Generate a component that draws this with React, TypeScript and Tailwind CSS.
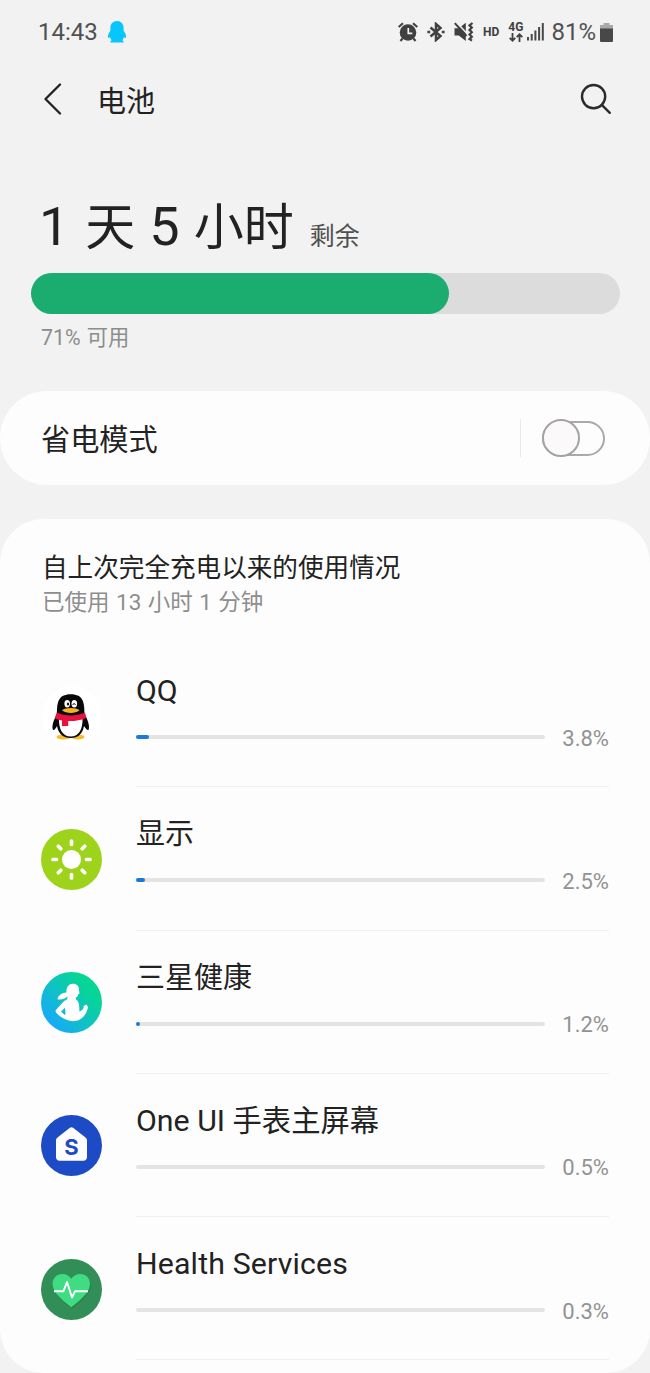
import React from 'react';

interface UsageItem {
  name: React.ReactNode;
  percent: string;
  barWidth: number;
  icon: React.ReactNode;
}

const QQStatusIcon = () => (
  <svg width="20" height="24" viewBox="0 0 20 24" fill="#08c5fb">
    <path d="M10 1C6 1 3.400 4 3.400 8v2.700C2 12.500.8 15 .9 17.200c.1 1.100.9.900 2.100-.2.300 1.300.8 2.400 1.700 3.300-1.200.5-1.500 1.300-1.300 2.300h13.200c.2-1-.1-1.800-1.300-2.300.9-.9 1.400-2 1.700-3.300 1.200 1.100 2 1.300 2.100.2.100-2.200-1.100-4.700-2.500-6.500V8C16.600 4 14 1 10 1z" />
  </svg>
);

const AlarmIcon = () => (
  <svg width="20" height="20" viewBox="0 0 20 20" fill="none">
    <circle cx="10" cy="10.500" r="8.300" fill="#404040" />
    <path d="M.7 5 5 1.300M19.300 5 15 1.300M4.500 16.500 2.500 19M15.500 16.500l2 2.500" stroke="#404040" strokeWidth="2.100" />
    <path d="M10.300 6v5.300h4" stroke="#f2f2f2" strokeWidth="1.700" />
  </svg>
);

const BluetoothIcon = () => (
  <svg width="18" height="20" viewBox="0 0 18 20" fill="none" stroke="#404040" strokeWidth="2.500">
    <path d="M3.500 5.500 13.500 14 9 18V2l4.500 4-10 8.500" />
    <path d="M.4 10h2.800M14.800 10h2.800" strokeWidth="2.600" />
  </svg>
);

const MuteVibrateIcon = () => (
  <svg width="20" height="20" viewBox="0 0 20 20" fill="none">
    <path d="M.5 6.300h4.300L11.800.7v18.300L4.800 13.500H.5z" fill="#404040" />
    <path d="M1.800-.5 14 12.700" stroke="#f2f2f2" strokeWidth="1.600" />
    <path d="M.8 1.200 12.500 14" stroke="#404040" strokeWidth="2" />
    <path d="m18.500 1-3 2.300 2.300 2.300-2.300 2.300 2.300 2.300-2.300 2.300 2.300 2.300-2.300 2.300 2.500 1.500" stroke="#404040" strokeWidth="2.200" />
  </svg>
);

const DataArrowsIcon = () => (
  <svg width="14" height="9" viewBox="0 0 14 9" fill="none" stroke="#404040" strokeWidth="1.800">
    <path d="M3.500 0v7.500M.7 4.900l2.800 2.800 2.800-2.800M10.500 9V1.500M7.700 4.100l2.800-2.800 2.800 2.800" />
  </svg>
);

const SignalIcon = () => (
  <svg width="17" height="18" viewBox="0 0 17 18" fill="#484848">
    <rect x="0" y="14" width="2" height="3.500" />
    <rect x="3.700" y="11" width="2" height="6.500" />
    <rect x="7.400" y="7.500" width="2" height="10" />
    <rect x="11.100" y="4" width="2" height="13.500" />
    <rect x="14.800" y="0" width="2" height="17.500" />
  </svg>
);

const BatteryIcon = () => (
  <svg width="13" height="19" viewBox="0 0 13 19">
    <path d="M0 2h3.500V0h6v2H13v4H0z" fill="#a9a9a9" />
    <path d="M0 5.500h13V18a1 1 0 0 1-1 1H1a1 1 0 0 1-1-1z" fill="#484848" />
  </svg>
);

const BackIcon = () => (
  <svg width="18" height="32" viewBox="0 0 18 32" fill="none" stroke="#222" strokeWidth="2.300" strokeLinecap="round" strokeLinejoin="round">
    <path d="M16 1.500 1.500 16 16 30.500" />
  </svg>
);

const SearchIcon = () => (
  <svg width="32" height="32" viewBox="0 0 32 32" fill="none" stroke="#2b2b2b" strokeWidth="2.400" strokeLinecap="round">
    <circle cx="13.600" cy="13.600" r="11.600" />
    <path d="m21.800 21.800 8 8" />
  </svg>
);

const QQIcon = () => (
  <svg width="61" height="61" viewBox="0 0 61 61">
    <circle cx="30.500" cy="30.500" r="30" fill="#fff" />
    <ellipse cx="22.500" cy="51" rx="7" ry="2.400" fill="#f4bb2c" />
    <ellipse cx="37" cy="51" rx="6.500" ry="2.400" fill="#f4bb2c" />
    <path d="M16 28c-3 5-5.500 12-4.200 15.500.7 1.500 3-.5 4.200-3.500C17.500 48.500 23 52 29.700 52c6.800 0 11.800-3.500 13.300-12 1.700 3 4 5 4.700 3.500C49 40 46.500 33 43.500 28c0-11-1-19.700-13.800-19.700S16 17 16 28z" fill="#080808" />
    <path d="M18 32c-.5 11 3.500 18.500 11.700 18.500S42 43 41.500 32z" fill="#fff" />
    <path d="M15.600 26.500c8 4 20 4 28.400 0l1.200 5.500c-6.500 2.500-12 3.300-18 3v5h-6.200v-5.500c-2.500-.4-4.900-1-7-2z" fill="#e9123f" />
    <ellipse cx="26.200" cy="17.800" rx="2.800" ry="3.700" fill="#fff" />
    <ellipse cx="33.300" cy="17.800" rx="2.800" ry="3.700" fill="#fff" />
    <ellipse cx="27" cy="18" rx="1.100" ry="1.600" fill="#080808" />
    <path d="M31.900 19c.2-2 2.100-2 2.400 0" fill="none" stroke="#080808" strokeWidth="1" />
    <path d="M21 24.300c3.500-3 14-3 17.500 0-4 3.700-13.500 3.700-17.500 0z" fill="#f4b324" />
  </svg>
);

const DisplayIcon = () => (
  <svg width="61" height="61" viewBox="0 0 61 61">
    <circle cx="30.500" cy="30.500" r="30.500" fill="#9ed31c" />
    <circle cx="30.500" cy="30.500" r="9.500" fill="#fff" />
    <path d="M30.500 12v3.500M30.500 45.500V49M12 30.500h3.500M45.500 30.500H49M17.300 17.300l2.500 2.500M41.200 41.200l2.500 2.500M43.700 17.300l-2.500 2.500M19.800 41.200l-2.500 2.500" stroke="#fff" strokeWidth="3.700" strokeLinecap="round" />
  </svg>
);

const SamsungHealthIcon = () => (
  <svg width="61" height="61" viewBox="0 0 61 61">
    <defs>
      <linearGradient id="healthBg" x1="0.15" y1="0.9" x2="0.8" y2="0.3">
        <stop offset="0%" stopColor="#18a8fb" />
        <stop offset="50%" stopColor="#10c0c8" />
        <stop offset="100%" stopColor="#05d695" />
      </linearGradient>
    </defs>
    <circle cx="30.500" cy="30.500" r="30.500" fill="url(#healthBg)" />
    <path d="M25.500 20.500c-.5-5 2-8.800 6.500-8.800 4.300 0 6.300 3 6 6.500l.5 3.200-1.300.8c-.2 2.200-1.200 3-2.500 3.100l.3 2c2.300 1.500 3.200 4.500 3.300 8.500l.1 3.700c2.500-1 3.800-2.300 4.300-4l-.2-1.500 3-1.500 1.500 2.500c-.7 5-3.700 10-8.500 12.800-3.500 1.800-8.500 1.800-12.500.3-4-1.500-8-4-11-7.500-.8-1-.5-2 .3-3l6-6.500c1.500-1.800 3.200-3 5-3.800l.2-3c-2.500 2.700-6 3.700-10 3 1-4 4-6.500 9-6.800z" fill="#fff" />
    <path d="m20 39.800 3.800-4.100c.7 2.500.7 4.800.4 7.500z" fill="#14b6df" />
  </svg>
);

const WatchHomeIcon = () => (
  <svg width="61" height="61" viewBox="0 0 61 61">
    <circle cx="30.500" cy="30.500" r="30.500" fill="#1d4bc5" />
    <path d="M28.900 12.800a2.600 2.600 0 0 1 3.200 0l12.400 9.600c1 .8 1.500 1.800 1.500 3V42c0 2.300-1.400 3.700-3.700 3.700H18.700C16.400 45.700 15 44.300 15 42V25.400c0-1.200.5-2.200 1.500-3z" fill="#fff" />
    <text x="30.500" y="39.800" textAnchor="middle" fill="#1d4bc5" className="font-['Inter','Roboto',sans-serif] text-[22px] font-bold">S</text>
  </svg>
);

const HealthServicesIcon = () => (
  <svg width="61" height="61" viewBox="0 0 61 61">
    <circle cx="30.500" cy="30.500" r="30.500" fill="#328e57" />
    <path d="M31 50C18 40 12.500 33 12.500 26.500c0-6 4-10 9.500-10 3.500 0 7 2 9 4.800 2-2.800 5.500-4.800 9-4.800 5.500 0 10 4 10 10C50 33 44 40 31 50z" fill="#2a7a4a" opacity=".6" />
    <path d="M30.300 48.300C17 38 11.600 31.500 11.600 24.800c0-5.700 4.200-9.800 9.700-9.800 3.700 0 7 1.900 9 4.700 2-2.800 5.300-4.700 9-4.700 5.500 0 9.700 4.100 9.700 9.800 0 6.700-5.400 13.200-18.700 23.500z" fill="#40dc84" />
    <path d="M13 32.200h9.500L26 23l5 15.500 3-6.300h13" fill="none" stroke="#fff" strokeWidth="1.900" strokeLinejoin="round" />
  </svg>
);

const USAGE: UsageItem[] = [
  { name: 'QQ', percent: '3.8%', barWidth: 13, icon: <QQIcon /> },
  { name: <span className="text-[29px]">显示</span>, percent: '2.5%', barWidth: 9, icon: <DisplayIcon /> },
  { name: <span className="text-[29px]">三星健康</span>, percent: '1.2%', barWidth: 4, icon: <SamsungHealthIcon /> },
  { name: <>One UI <span className="text-[29.300px]">手表主屏幕</span></>, percent: '0.5%', barWidth: 0, icon: <WatchHomeIcon /> },
  { name: <span className="tracking-[0.150px]">Health Services</span>, percent: '0.3%', barWidth: 0, icon: <HealthServicesIcon /> },
];

const UsageRow: React.FC<{ item: UsageItem }> = ({ item }) => (
  <div className="flex h-[143.25px] items-center pl-[41px] pr-[41px]">
    <div className="mt-px w-[95px] shrink-0">{item.icon}</div>
    <div className="flex h-full flex-1 flex-col border-b border-[#f0f0f0]">
      <p className="mt-[27px] h-10 whitespace-nowrap text-[30.300px] leading-10 text-[#222]">{item.name}</p>
      <div className="mt-[12px] flex h-7 items-center justify-between">
        <div className="h-1 w-[409px] rounded-full bg-[#e4e4e4]">
          <div className="h-1 rounded-full bg-[#1b7ad9]" style={{ width: item.barWidth }} />
        </div>
        <span className="pt-[3px] text-[22px] leading-7 text-[#929292]">{item.percent}</span>
      </div>
    </div>
  </div>
);

export default function App() {
  return (
    <div className="h-[1373px] w-[650px] overflow-hidden bg-[#f2f2f2] font-['Roboto','Noto_Sans_CJK_SC',sans-serif] text-[#222]">
      {/* Status bar */}
      <div className="flex h-16 items-center justify-between pl-[38px] pr-[37px] text-[#404040]">
        <div className="flex items-center gap-[9px]">
          <span className="text-2xl leading-8 text-[#505050]">14:43</span>
          <QQStatusIcon />
        </div>
        <div className="flex items-center">
          <AlarmIcon />
          <div className="ml-[9px]"><BluetoothIcon /></div>
          <div className="ml-[9px]"><MuteVibrateIcon /></div>
          <span className="ml-[9px] text-[12px] font-bold leading-4">HD</span>
          <div className="ml-[9px] flex flex-col items-center gap-px">
            <span className="text-[12px] font-bold leading-[10px]">4G</span>
            <DataArrowsIcon />
          </div>
          <div className="ml-[4px]"><SignalIcon /></div>
          <span className="ml-[7px] text-2xl leading-8 text-[#505050]">81%</span>
          <div className="ml-[4px]"><BatteryIcon /></div>
        </div>
      </div>

      {/* Title bar */}
      <header className="flex h-[70px] items-center pl-[44px] pr-[38px]">
        <BackIcon />
        <h1 className="ml-[35px] flex-1 pt-[5px] text-[29px] leading-10">电池</h1>
        <SearchIcon />
      </header>

      {/* Remaining time */}
      <section className="h-[257px] px-[31px] pt-[57px]">
        <div className="flex h-[82px] items-baseline whitespace-nowrap pl-[8px] leading-[72px]">
          <span className="text-[54px]">1</span>
          <span className="ml-[16px] text-[50px]">天</span>
          <span className="ml-[14px] text-[54px]">5</span>
          <span className="ml-[14px] text-[50px]">小时</span>
          <span className="ml-[16px] text-[25px] text-[#505050]">剩余</span>
        </div>
        <div className="h-[41px] w-[589px] rounded-full bg-[#dcdcdc]">
          <div className="h-full w-[71%] rounded-full bg-[#1bad6f]" />
        </div>
        <p className="mt-[10px] pl-[10px] text-[21.300px] leading-7 text-[#8c8c8c] [word-spacing:1px]">71% 可用</p>
      </section>

      {/* Power saving */}
      <section className="flex h-[94px] items-center rounded-[47px] bg-[#fdfdfd] pl-[41px] pr-[45px]">
        <span className="flex-1 pt-[3px] text-[29.200px] leading-10">省电模式</span>
        <div className="h-[38px] w-px bg-[#e9e9e9]" />
        <div className="ml-[21px] flex h-[38px] w-[63px] items-center">
          <div className="z-10 h-[38px] w-[38px] shrink-0 rounded-full border-2 border-[#a3a3a3] bg-[#fbf9fa]" />
          <div className="-ml-[38px] h-[35px] w-[63px] shrink-0 rounded-full border-2 border-[#a9a9a9]" />
        </div>
      </section>

      {/* Usage since last full charge */}
      <section className="mt-[34px] h-[854px] rounded-[44px] bg-[#fdfdfd] pt-[31px]">
        <div className="h-[94px] pl-[42px]">
          <h2 className="text-[25.600px] leading-9">自上次完全充电以来的使用情况</h2>
          <p className="text-[22.500px] leading-8 text-[#8e8e8e] [word-spacing:0.900px]">已使用 13 小时 1 分钟</p>
        </div>
        {USAGE.map((item, i) => (
          <UsageRow key={i} item={item} />
        ))}
      </section>
    </div>
  );
}
